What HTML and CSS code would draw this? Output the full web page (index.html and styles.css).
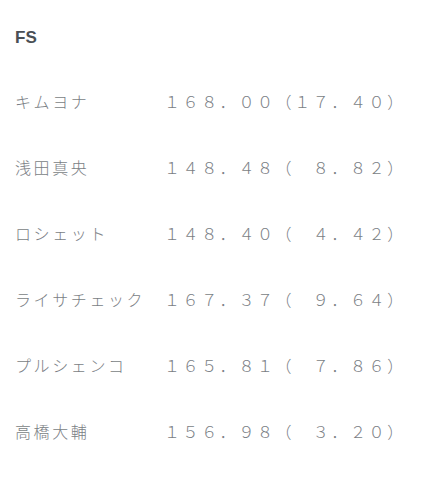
FILE: index.html
```html
<!DOCTYPE html>
<html lang="ja">
<head>
<meta charset="utf-8">
<link rel="stylesheet" href="styles.css">
</head>
<body>
<div class="page">
  <h2 class="title">FS</h2>
  <div class="rows">
    <div class="row"><span class="name">キムヨナ</span><span class="score">１６８．００（１７．４０）</span></div>
    <div class="row"><span class="name">浅田真央</span><span class="score">１４８．４８（　８．８２）</span></div>
    <div class="row"><span class="name">ロシェット</span><span class="score">１４８．４０（　４．４２）</span></div>
    <div class="row"><span class="name">ライサチェック</span><span class="score">１６７．３７（　９．６４）</span></div>
    <div class="row"><span class="name">プルシェンコ</span><span class="score">１６５．８１（　７．８６）</span></div>
    <div class="row"><span class="name">高橋大輔</span><span class="score">１５６．９８（　３．２０）</span></div>
  </div>
</div>
</body>
</html>
```

FILE: styles.css
```css
html, body {
  margin: 0;
  padding: 0;
  background: #ffffff;
}

.page {
  padding: 28px 15px;
}

.title {
  margin: 0;
  font-family: "Liberation Sans", Arial, sans-serif;
  font-weight: bold;
  font-size: 17px;
  line-height: 20px;
  color: #4a4f55;
}

.rows {
  margin-top: 20px;
}

.row {
  display: grid;
  grid-template-columns: 149px auto;
  padding: 22px 0;
  line-height: 22px;
  font-family: "Noto Sans CJK JP", sans-serif;
  font-size: 16px;
  font-weight: 300;
  letter-spacing: 2.6px;
  color: #7a7e84;
  white-space: nowrap;
}
```
